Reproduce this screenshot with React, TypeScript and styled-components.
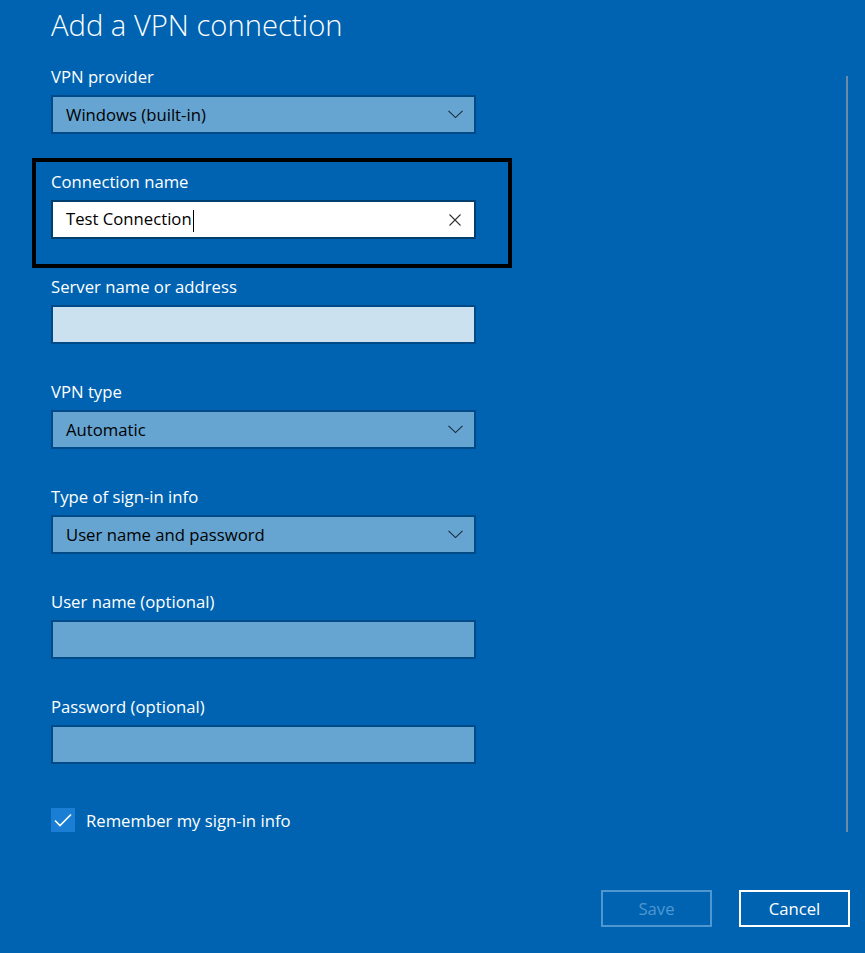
import { createGlobalStyle } from 'styled-components';
import styled from 'styled-components';

const GlobalStyle = createGlobalStyle`
  html, body {
    margin: 0;
    padding: 0;
    background: #0063b1;
  }
  body {
    font-family: "Open Sans", "Noto Sans", sans-serif;
    color: #ffffff;
  }
`

const Page = styled.div`
  position: relative;
  width: 865px;
  height: 953px;
  box-sizing: border-box;
  padding: 6px 15px 0 51px;
  background: #0063b1;
  overflow: hidden;
`

const Title = styled.h1`
  margin: 0;
  font-size: 29.2px;
  line-height: 38px;
  font-weight: 300;
  color: #ffffff;
`

const Form = styled.div`
  display: flex;
  flex-direction: column;
  gap: 37px;
  width: 425px;
  margin-top: 22px;
`

const Group = styled.div<{ $highlight?: boolean }>`
  position: relative;
  display: flex;
  flex-direction: column;
  gap: 7px;

  ${p => p.$highlight && `
    &::after {
      content: '';
      position: absolute;
      left: -19px;
      top: -13px;
      right: -36px;
      bottom: -29px;
      border: 4px solid #000000;
      pointer-events: none;
    }
  `}
`

const Label = styled.div`
  font-size: 16.7px;
  line-height: 22px;
  color: #ffffff;
`

const Field = styled.div<{ $variant?: 'normal' | 'light' | 'focus' }>`
  display: flex;
  align-items: center;
  height: 39px;
  box-sizing: border-box;
  padding: 0 11px 0 13px;
  border: 2px solid ${p => (p.$variant === 'focus' ? '#003e6e' : '#004a87')};
  background: ${p =>
    p.$variant === 'focus' ? '#ffffff' : p.$variant === 'light' ? '#cce1ef' : '#66a5d2'};
  color: #000000;
  font-size: 16.7px;
`

const Value = styled.span`
  flex: 1;
  white-space: nowrap;
`

const Caret = styled.span`
  display: inline-block;
  width: 1px;
  height: 22px;
  margin-left: 1px;
  vertical-align: middle;
  background: #000000;
`

const IconWrap = styled.span`
  display: flex;
  align-items: center;
  justify-content: center;
  width: 16px;
  height: 16px;
`

const CheckRow = styled.div`
  display: flex;
  align-items: center;
  gap: 11px;
  margin-top: 44px;
  font-size: 16.7px;
`

const CheckBox = styled.span`
  display: flex;
  align-items: center;
  justify-content: center;
  width: 24px;
  height: 24px;
  background: #1a7fd4;
`

const Footer = styled.div`
  display: flex;
  justify-content: flex-end;
  gap: 27px;
  margin-top: 58px;
`

const Button = styled.div<{ $disabled?: boolean }>`
  display: flex;
  align-items: center;
  justify-content: center;
  width: 111px;
  height: 37px;
  box-sizing: border-box;
  border: 2px solid ${p => (p.$disabled ? '#4f97d1' : '#ffffff')};
  color: ${p => (p.$disabled ? '#4f97d1' : '#ffffff')};
  font-size: 16.7px;
`

const ScrollBar = styled.div`
  position: absolute;
  left: 846px;
  top: 76px;
  width: 2px;
  height: 756px;
  background: #6b8ba6;
`

function Chevron() {
  return (
    <IconWrap>
      <svg width="15" height="9" viewBox="0 0 15 9">
        <polyline points="0.5,0.8 7.5,7.6 14.5,0.8" fill="none" stroke="#1b2a3a" strokeWidth="1.1" />
      </svg>
    </IconWrap>
  )
}

function ClearIcon() {
  return (
    <IconWrap>
      <svg width="12" height="12" viewBox="0 0 12 12">
        <path d="M0.5 0.5 L11.5 11.5 M11.5 0.5 L0.5 11.5" stroke="#333333" strokeWidth="1.1" />
      </svg>
    </IconWrap>
  )
}

function CheckMark() {
  return (
    <svg width="18" height="14" viewBox="0 0 18 14">
      <polyline points="1,7.5 6,12.5 17,1.5" fill="none" stroke="#ffffff" strokeWidth="1.6" />
    </svg>
  )
}

declare interface FieldProps {
  label: string
  value?: string
  dropdown?: boolean
  variant?: 'normal' | 'light' | 'focus'
}

function FormField({ label, value, dropdown, variant }: FieldProps) {
  return (
    <Group>
      <Label>{label}</Label>
      <Field $variant={variant}>
        <Value>{value}</Value>
        {dropdown ? <Chevron /> : null}
      </Field>
    </Group>
  )
}

export default function App() {
  return (
    <>
      <GlobalStyle />
      <Page>
        <Title>Add a VPN connection</Title>
        <Form>
          <FormField label="VPN provider" value="Windows (built-in)" dropdown />
          <Group $highlight>
            <Label>Connection name</Label>
            <Field $variant="focus">
              <Value>
                Test Connection<Caret />
              </Value>
              <ClearIcon />
            </Field>
          </Group>
          <FormField label="Server name or address" variant="light" />
          <FormField label="VPN type" value="Automatic" dropdown />
          <FormField label="Type of sign-in info" value="User name and password" dropdown />
          <FormField label="User name (optional)" />
          <FormField label="Password (optional)" />
        </Form>
        <CheckRow>
          <CheckBox>
            <CheckMark />
          </CheckBox>
          <span>Remember my sign-in info</span>
        </CheckRow>
        <Footer>
          <Button $disabled>Save</Button>
          <Button>Cancel</Button>
        </Footer>
        <ScrollBar />
      </Page>
    </>
  )
}
